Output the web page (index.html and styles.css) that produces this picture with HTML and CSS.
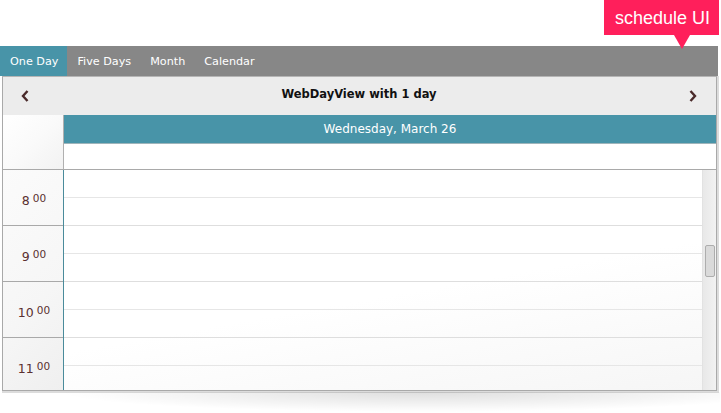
FILE: index.html
```
<!DOCTYPE html>
<html>
<head>
<meta charset="utf-8">
<link rel="stylesheet" href="styles.css">
</head>
<body>
<div class="page">
  <div class="badge">schedule UI</div>
  <nav class="tabs">
    <span class="tab active">One Day</span>
    <span class="tab">Five Days</span>
    <span class="tab">Month</span>
    <span class="tab">Calendar</span>
  </nav>
  <div class="panel">
    <div class="navbar">
      <span class="arrow"><svg width="10" height="14" viewBox="0 0 10 14"><path d="M7.5 2 L3 7 L7.5 12" fill="none" stroke="#4a2a2a" stroke-width="2.4"/></svg></span>
      <div class="title">WebDayView with 1 day</div>
      <span class="arrow"><svg width="10" height="14" viewBox="0 0 10 14"><path d="M2.5 2 L7 7 L2.5 12" fill="none" stroke="#4a2a2a" stroke-width="2.4"/></svg></span>
    </div>
    <div class="dayhead">
      <div class="corner"></div>
      <div class="dcol">
        <div class="date">Wednesday, March 26</div>
        <div class="allday"></div>
      </div>
    </div>
    <div class="body">
      <div class="times">
        <div class="hour"><span class="h">8</span><sup>00</sup></div>
        <div class="hour"><span class="h">9</span><sup>00</sup></div>
        <div class="hour"><span class="h">10</span><sup>00</sup></div>
        <div class="hour"><span class="h">11</span><sup>00</sup></div>
      </div>
      <div class="slots">
        <div class="slot"><div class="half"></div><div class="half"></div></div>
        <div class="slot"><div class="half"></div><div class="half"></div></div>
        <div class="slot"><div class="half"></div><div class="half"></div></div>
        <div class="slot"><div class="half"></div><div class="half"></div></div>
      </div>
      <div class="scrollbar"><div class="thumb"></div></div>
    </div>
  </div>
  <div class="shadow"></div>
</div>
</body>
</html>
```
FILE: styles.css
```
* { box-sizing: border-box; }
html, body { margin: 0; padding: 0; background: #fff; }
body { font-family: "DejaVu Sans", Verdana, sans-serif; }
.page { position: relative; width: 721px; height: 413px; overflow: hidden; }

.badge {
  position: absolute; left: 604px; top: 0; width: 115px; height: 35px;
  background: #ff1f5b; color: #fff;
  font-family: "Liberation Sans", Arial, sans-serif; font-size: 18px;
  line-height: 37px; padding-left: 11px; z-index: 2;
}
.badge::after {
  content: ""; position: absolute; left: 70px; top: 35px;
  border-left: 8px solid transparent; border-right: 8px solid transparent;
  border-top: 14px solid #ff1f5b;
}

.tabs {
  margin-top: 46px; width: 718px; height: 30px; background: #878787;
  display: flex; align-items: stretch;
}
.tab {
  color: #fff; font-size: 11.2px; padding: 0 9px 0 10px; line-height: 31px;
}
.tab.active { background: #4894a8; }

.panel {
  margin-left: 2px; width: 715px;
  border: 1px solid #a9a9a9; border-top-color: #b5b5b5;
  box-shadow: 1px 1px 0 1px #dcdcdc;
  background: #fff;
}
.navbar {
  height: 38px; background: #ececec;
  display: flex; align-items: center; justify-content: space-between;
  padding: 0 18px 0 17px;
}
.arrow { display: flex; width: 10px; height: 14px; }
.title { font-weight: bold; font-size: 11.5px; color: #111; margin-top: -4px; }

.dayhead { display: flex; height: 55px; border-bottom: 1px solid #a9a9a9; }
.corner {
  width: 61px; border-right: 1px solid #b0b0b0;
  background: linear-gradient(135deg, #fff 0%, #fafafa 50%, #f2f2f2 100%);
}
.dcol { flex: 1; display: flex; flex-direction: column; }
.date {
  height: 29px; background: #4894a8; color: #fff; font-size: 12px;
  text-align: center; line-height: 29px; border-bottom: 1px solid #9fb5bb;
}
.allday { flex: 1; background: #fff; }

.body { display: flex; height: 220px; overflow: hidden; }
.times {
  width: 61px; border-right: 1px solid #4a8b9b;
  background: linear-gradient(135deg, #fbfbfb 0%, #f6f6f6 60%, #efefef 100%);
}
.hour {
  height: 56px; border-bottom: 1px solid #a9a9a9;
  display: flex; justify-content: center; align-items: center;
  color: #5a3030; padding-top: 6px; padding-left: 2px;
}
.hour .h { font-size: 12.5px; }
.hour sup { font-size: 10.5px; margin-left: 3px; position: relative; top: -3px; }
.slots {
  flex: 1;
  background: linear-gradient(170deg, #fff 0%, #fff 55%, #f6f6f6 100%);
}
.slot { height: 56px; }
.half { height: 28px; border-bottom: 1px solid #e6e6e6; }
.half + .half { border-bottom-color: #dedede; }
.scrollbar {
  width: 14px; background: linear-gradient(90deg, #e8e8e8, #f2f2f2);
  border-left: 1px solid #e2e2e2; padding: 75px 0 0 2px;
}
.thumb {
  width: 10px; height: 32px; border: 1px solid #adadad; border-radius: 2px;
  background: #dadada;
}

.shadow {
  margin: 1px 0 0 60px; width: 660px; height: 20px;
  background: radial-gradient(ellipse 55% 100% at 55% 0%, rgba(0,0,0,0.13), rgba(0,0,0,0) 100%);
}
```
